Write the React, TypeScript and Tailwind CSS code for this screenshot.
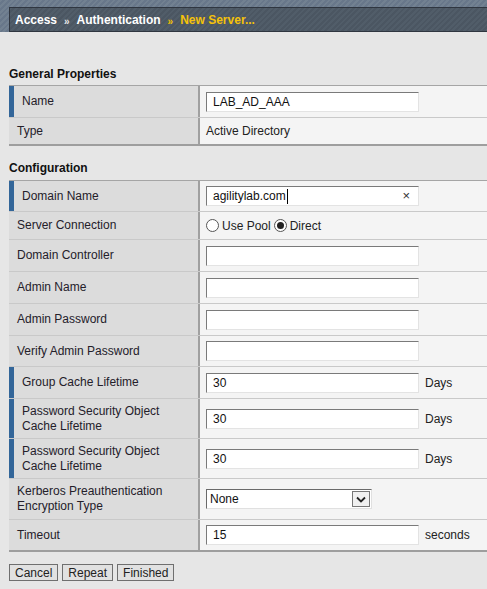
import React from "react";

type Row = {
  label: React.ReactNode;
  h: string;
  required?: boolean;
  value: React.ReactNode;
};

const TextBox = ({ value, clear }: { value?: string; clear?: boolean }) => (
  <div className="relative flex h-[20px] w-[213px] items-center border border-t-[#7a7a7a] border-l-[#7a7a7a] border-b-[#e3e3e3] border-r-[#e3e3e3] bg-white pl-[6px] text-[12px] text-[#111]">
    <span>{value}</span>
    {clear && <span className="ml-px h-[15px] w-px bg-black" />}
    {clear && <span className="absolute right-[8px] top-[1px] text-[13px] leading-[16px] text-[#333]">×</span>}
  </div>
);

const Radio = ({ checked }: { checked?: boolean }) => (
  <span className="flex h-[13px] w-[13px] items-center justify-center rounded-full border border-[#555] bg-white">
    {checked && <span className="h-[7px] w-[7px] rounded-full bg-[#222]" />}
  </span>
);

const Unit = ({ children }: { children: React.ReactNode }) => (
  <span className="ml-[6px] text-[12px] text-[#222]">{children}</span>
);

const Table = ({ rows }: { rows: Row[] }) => (
  <div className="ml-[9px] border-b-2 border-b-[#9e9e9e] border-t border-t-[#a5a5a5]">
    {rows.map((r, i) => (
      <div key={i} className={`flex ${r.h} ${i > 0 ? "border-t border-t-[#c9c9c9]" : ""}`}>
        <div className="flex w-[191px] shrink-0 items-center border-r-2 border-r-[#a0a0a0] bg-[#dcdcdc]">
          {r.required && <div className="h-full w-[5px] bg-[#336699]" />}
          <div className="pl-[8px] text-[12px] leading-[15px] text-[#24202a]">{r.label}</div>
        </div>
        <div className="flex flex-1 items-center bg-[#f4f4f4] pl-[6px]">{r.value}</div>
      </div>
    ))}
  </div>
);

export default function App() {
  const general: Row[] = [
    { label: "Name", h: "h-[31px]", required: true, value: <TextBox value="LAB_AD_AAA" /> },
    { label: "Type", h: "h-[27px]", value: <span className="text-[12px] text-[#222]">Active Directory</span> },
  ];

  const days = (
    <div className="flex items-center">
      <TextBox value="30" />
      <Unit>Days</Unit>
    </div>
  );

  const pso = (
    <>
      Password Security Object
      <br />
      Cache Lifetime
    </>
  );

  const config: Row[] = [
    { label: "Domain Name", h: "h-[30px]", required: true, value: <TextBox value="agilitylab.com" clear /> },
    {
      label: "Server Connection",
      h: "h-[28px]",
      value: (
        <div className="flex items-center text-[12px] text-[#222]">
          <Radio />
          <span className="ml-[3px]">Use Pool</span>
          <span className="ml-[3px]"><Radio checked /></span>
          <span className="ml-[3px]">Direct</span>
        </div>
      ),
    },
    { label: "Domain Controller", h: "h-[32px]", value: <TextBox /> },
    { label: "Admin Name", h: "h-[32px]", value: <TextBox /> },
    { label: "Admin Password", h: "h-[32px]", value: <TextBox /> },
    { label: "Verify Admin Password", h: "h-[31px]", value: <TextBox /> },
    { label: "Group Cache Lifetime", h: "h-[32px]", required: true, value: days },
    { label: pso, h: "h-[40px]", required: true, value: days },
    { label: pso, h: "h-[40px]", required: true, value: days },
    {
      label: (
        <>
          Kerberos Preauthentication
          <br />
          Encryption Type
        </>
      ),
      h: "h-[41px]",
      value: (
        <div className="flex h-[20px] w-[166px] items-center border border-t-[#6a6a6a] border-l-[#6a6a6a] border-b-[#e0e0e0] border-r-[#e0e0e0] bg-white text-[12px] text-[#111]">
          <span className="flex-1 pl-[3px]">None</span>
          <span className="mr-px flex h-[16px] w-[18px] items-center justify-center border border-[#777] bg-[#f0f0f0]">
            <svg width="10" height="7" viewBox="0 0 10 7">
              <path d="M1 1.5 L5 5.5 L9 1.5" fill="none" stroke="#222" strokeWidth="1.8" />
            </svg>
          </span>
        </div>
      ),
    },
    {
      label: "Timeout",
      h: "h-[31px]",
      value: (
        <div className="flex items-center">
          <TextBox value="15" />
          <Unit>seconds</Unit>
        </div>
      ),
    },
  ];

  return (
    <div className="h-[589px] w-[487px] overflow-hidden bg-[#e6e6e6] font-['Liberation_Sans',Arial,sans-serif]">
      <div className="h-[32px] bg-[repeating-linear-gradient(135deg,#728191_0px,#728191_2px,#68778a_2px,#68778a_4px)] pl-[9px] pt-[7px]">
        <div className="flex h-[25px] items-center border border-r-0 border-[#2f3640] bg-[repeating-linear-gradient(135deg,#515d69_0px,#515d69_2px,#4b5662_2px,#4b5662_4px)] pl-[5px] text-[12px] font-bold">
          <span className="text-white">Access</span>
          <span className="mx-[7px] mt-[3px] text-[10px] text-[#e8e8e8]">»</span>
          <span className="text-white">Authentication</span>
          <span className="mx-[7px] mt-[3px] text-[10px] text-[#f2c200]">»</span>
          <span className="text-[#f5c20a]">New Server...</span>
        </div>
      </div>

      <div className="mt-[33px] pl-[9px] text-[12px] leading-[18px] font-bold text-[#111]">General Properties</div>
      <div className="mt-[2px]">
        <Table rows={general} />
      </div>

      <div className="mt-[13px] pl-[9px] text-[12px] leading-[18px] font-bold text-[#111]">Configuration</div>
      <div className="mt-[3px]">
        <Table rows={config} />
      </div>

      <div className="ml-[9px] mt-[12px] flex gap-[4px]">
        {["Cancel", "Repeat", "Finished"].map((b) => (
          <button
            key={b}
            className="h-[17px] border border-[#6f6f6f] bg-[#e1e1e1] px-[5px] text-[12px] leading-[14px] text-[#222]"
          >
            {b}
          </button>
        ))}
      </div>
    </div>
  );
}
